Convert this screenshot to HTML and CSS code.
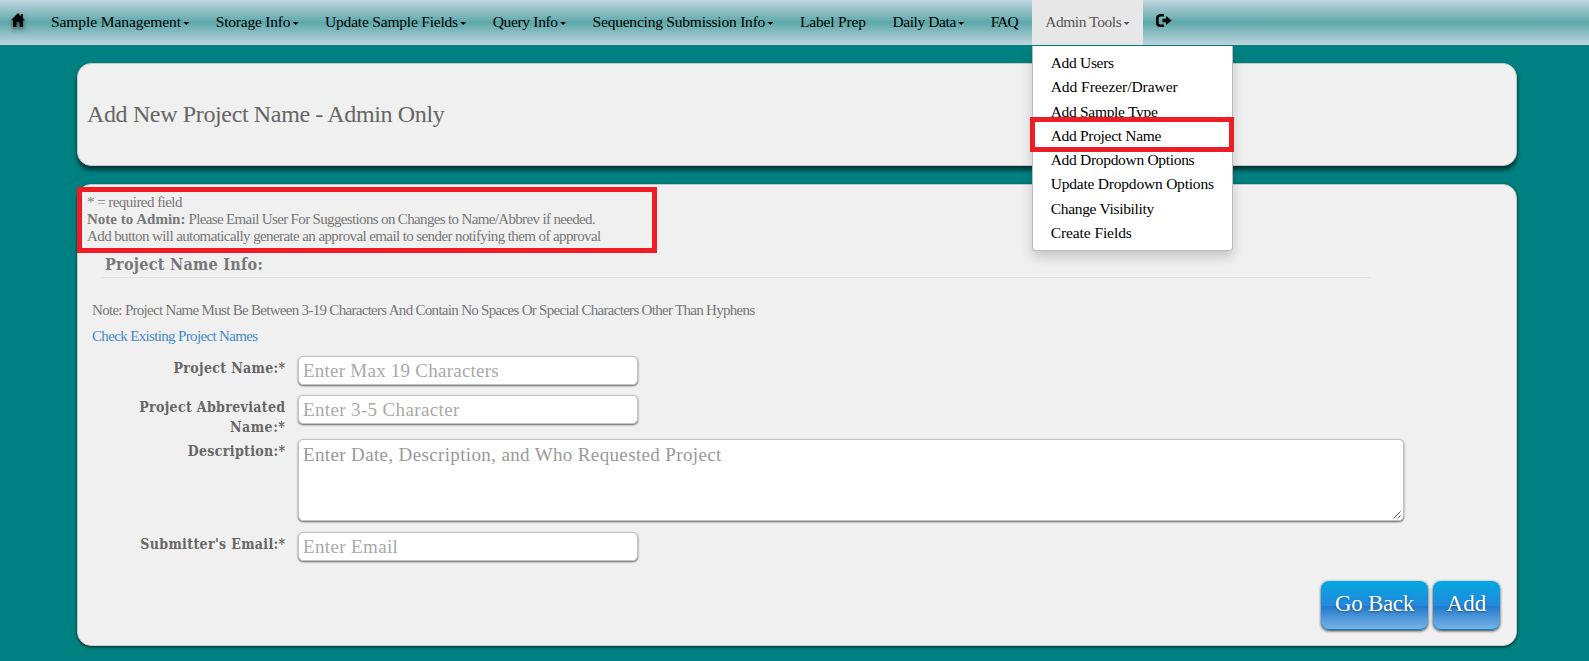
FILE: index.html
```
<!DOCTYPE html>
<html lang="en">
<head>
<meta charset="utf-8">
<title>Add New Project Name</title>
<link rel="stylesheet" href="styles.css">
</head>
<body>
<nav class="navbar">
  <a class="home"><svg width="14" height="14" viewBox="0 0 14 14"><path d="M7 0 L14 7.2 H12 V14 H8.7 V9 H5.4 V14 H2 V7.2 H0 Z M10 1 H12 V5 L10 3 Z"/></svg></a>
  <a class="item management">Sample Management<i class="caret"></i></a>
  <a class="item storage">Storage Info<i class="caret"></i></a>
  <a class="item update">Update Sample Fields<i class="caret"></i></a>
  <a class="item query">Query Info<i class="caret"></i></a>
  <a class="item sequencing">Sequencing Submission Info<i class="caret"></i></a>
  <a class="item label-prep">Label Prep</a>
  <a class="item daily">Daily Data<i class="caret"></i></a>
  <a class="item faq">FAQ</a>
  <div class="open">
    <a class="item active">Admin Tools<i class="caret"></i></a>
    <div class="menu">
      <a>Add Users</a>
      <a class="freezer">Add Freezer/Drawer</a>
      <a>Add Sample Type</a>
      <a>Add Project Name</a>
      <a>Add Dropdown Options</a>
      <a class="update-options">Update Dropdown Options</a>
      <a>Change Visibility</a>
      <a class="create">Create Fields</a>
      <div class="mark mark-menu"></div>
    </div>
  </div>
  <a class="logout"><svg width="16" height="14" viewBox="0 0 16 14"><path class="ring" d="M8 1.3 H4.6 Q1.3 1.3 1.3 4.6 V8.4 Q1.3 11.7 4.6 11.7 H8"/><path d="M6.5 4.7 H10 V2 L15.7 6.5 L10 11 V8.3 H6.5 Z"/></svg></a>
</nav>
<main>
  <header class="panel head"><h1>Add New Project Name - Admin Only</h1></header>
  <section class="panel body">
    <div class="notes">
      <div class="mark mark-notes"></div>
      <p class="required">* = required field</p>
      <p class="suggest"><b>Note to Admin:</b> Please Email User For Suggestions on Changes to Name/Abbrev if needed.</p>
      <p class="approval">Add button will automatically generate an approval email to sender notifying them of approval</p>
    </div>
    <h2>Project Name Info:</h2>
    <p class="rule-note">Note: Project Name Must Be Between 3-19 Characters And Contain No Spaces Or Special Characters Other Than Hyphens</p>
    <p class="check"><a>Check Existing Project Names</a></p>
    <form>
      <div class="row"><label>Project Name:*</label><div class="field short">Enter Max 19 Characters</div></div>
      <div class="row abbr"><label>Project Abbreviated <span class="name">Name:*</span></label><div class="field">Enter 3-5 Character</div></div>
      <div class="row desc"><label>Description:*</label><div class="field area">Enter Date, Description, and Who Requested Project<svg class="grip" width="8" height="8" viewBox="0 0 8 8"><path d="M.5 7.5 L7.5 .5 M4.5 7.5 L7.5 4.5"/></svg></div></div>
      <div class="row"><label>Submitter's Email:*</label><div class="field">Enter Email</div></div>
    </form>
    <div class="actions"><button type="button" class="back">Go Back</button><button type="button" class="add">Add</button></div>
  </section>
</main>
</body>
</html>
```
FILE: styles.css
```
* { box-sizing: border-box; }
body { margin: 0; height: 661px; overflow: hidden; background: #008080; font-family: "Liberation Serif", serif; color: #777; }
p, h1, h2 { margin: 0; white-space: nowrap; }

/* Navigation */
.navbar { display: flex; height: 45px; background: linear-gradient(#c0d5de, #5da8aa 50%, #c0d5de); font-size: 15.5px; line-height: 20px; color: #000; white-space: nowrap; }
.home { width: 37.5px; padding: 13px 0 0 11px; }
.home svg { display: block; filter: drop-shadow(0 3px 2px rgba(0,0,0,.5)); }
.item { display: flex; height: 45px; padding: 12px 13px 0 13.5px; }
.management { letter-spacing: -.08px; }
.storage { letter-spacing: -.21px; }
.update { letter-spacing: -.2px; }
.query { letter-spacing: -.34px; }
.sequencing { letter-spacing: -.22px; }
.label-prep { letter-spacing: -.16px; }
.daily { letter-spacing: -.41px; }
.faq { width: 54.5px; letter-spacing: -.95px; }
.caret { width: 6px; height: 3px; margin: 10px 0 0 2.3px; background: currentColor; clip-path: polygon(0 0, 100% 0, 50% 100%); }
.open { position: relative; }
.active { background: #e7e7e7; color: #555; width: 111px; letter-spacing: -.44px; }
.menu { position: absolute; z-index: 2; left: 0; top: 46px; width: 201px; height: 205px; padding: 5px 0 0 18px; background: #fff; border: 1px solid #bbb; border-top: 0; border-radius: 0 0 4px 4px; box-shadow: 0 6px 12px rgba(0,0,0,.18); letter-spacing: -.31px; }
.menu a { display: block; height: 24.3px; line-height: 24px; }
.menu .freezer { letter-spacing: -.05px; }
.menu .update-options { letter-spacing: -.21px; }
.menu .create { letter-spacing: -.09px; }
.mark { position: absolute; border: 5px solid #ee1c25; }
.mark-menu { left: -3px; top: 71px; width: 204px; height: 35px; }
.logout { padding: 14px 0 0 13.5px; }
.logout svg { display: block; }
.ring { fill: none; stroke: #000; stroke-width: 2.6; }

/* Panels */
main { width: 1440px; margin: 18px 0 0 77px; }
.panel { background: #f0f0f0; border: 1px solid #c8c8c8; border-radius: 14px; }
.head { height: 103px; padding: 36px 9px; box-shadow: 0 4px 4px rgba(0,0,0,.6); }
h1 { font-size: 24px; line-height: 28px; font-weight: 400; color: #666; letter-spacing: -.36px; }
.body { height: 462px; margin-top: 18px; box-shadow: 0 1px 3px rgba(0,0,0,.7); }
.notes { position: relative; padding: 9px 9px 0; font-size: 15px; line-height: 17px; }
.required { letter-spacing: -.54px; }
.suggest { letter-spacing: -.65px; }
.suggest b { letter-spacing: .01px; }
.approval { letter-spacing: -.6px; }
.mark-notes { left: -1px; top: 2px; width: 580px; height: 66px; }
h2 { width: 1270px; margin: 10px 0 0 23px; padding-left: 4px; height: 23px; border-bottom: 1px solid #e2e2e2; font: 700 16px/20px "DejaVu Serif Condensed", "DejaVu Serif", serif; font-stretch: condensed; letter-spacing: .28px; }
.rule-note { margin: 22px 0 0 14px; font-size: 15px; line-height: 20px; letter-spacing: -.7px; }
.check { margin: 6px 0 0 14px; font-size: 15px; line-height: 20px; color: #428bca; letter-spacing: -.65px; }

/* Form */
form { margin-top: 9.5px; }
.row { display: grid; grid-template-columns: 207.5px auto; column-gap: 12px; height: 39.5px; }
.row.abbr { height: 44px; }
.row.desc { height: 93px; }
label { text-align: right; font: 700 14px/20px "DejaVu Serif Condensed", "DejaVu Serif", serif; font-stretch: condensed; color: #666; padding: 2px 0 0 50px; letter-spacing: .34px; }
.name { letter-spacing: .54px; }
.field { position: relative; width: 340px; height: 29px; padding: 2px 4.5px; background: #fff; border: 1px solid #c4c4c4; border-radius: 5px; box-shadow: 0 1px 2px rgba(0,0,0,.6); font-size: 19px; line-height: 24px; color: #a9a9a9; letter-spacing: .36px; }
.short { letter-spacing: .24px; }
.area { width: 1106px; height: 82px; padding-top: 3px; color: #999; }
.grip { position: absolute; right: 2px; bottom: 1px; }
.grip path { stroke: #555; stroke-width: 1; }
.actions { display: flex; justify-content: flex-end; gap: 5px; margin: 9px 16px 0 0; }
button { height: 49px; padding: 0 0 3px; border: 0; border-radius: 8px; font: 23px "Liberation Serif", serif; color: #fff; text-shadow: 0 1px 2px rgba(0,0,0,.4); background: linear-gradient(#00a8e0, #2489dd 50%, #1e78cb 50%, #7db5e8); box-shadow: inset 0 -1px 0 #0b83b5, 0 1px 3px rgba(0,0,0,.8); }
.back { width: 107px; letter-spacing: -.31px; }
.add { width: 67px; letter-spacing: .12px; }
```
